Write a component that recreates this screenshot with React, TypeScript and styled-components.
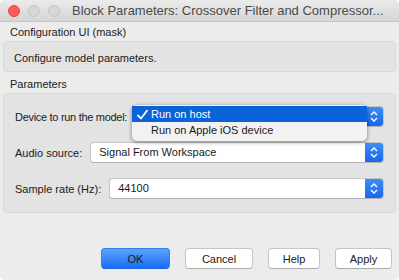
import React from "react";
import styled, { createGlobalStyle } from "styled-components";

const GlobalStyle = createGlobalStyle`
  html, body {
    margin: 0;
    padding: 0;
    background: #ffffff;
  }
  body {
    font-family: "Liberation Sans", Arial, sans-serif;
    -webkit-font-smoothing: antialiased;
  }
`;

const Window = styled.div`
  width: 399px;
  height: 280px;
  display: flex;
  flex-direction: column;
  background: #ececec;
  border-radius: 5px;
  overflow: hidden;
  box-sizing: border-box;
`;

const TitleBar = styled.div`
  height: 22px;
  flex: none;
  display: flex;
  align-items: center;
  padding-left: 8px;
  background: linear-gradient(#ebebeb, #d5d5d5);
  border-bottom: 1px solid #c4c4c4;
  box-sizing: border-box;
`;

const Light = styled.span<{ $color: string; $border: string }>`
  width: 12px;
  height: 12px;
  border-radius: 50%;
  background: ${(p) => p.$color};
  border: 1px solid ${(p) => p.$border};
  box-sizing: border-box;
  margin-right: 8px;
`;

const Title = styled.div`
  margin-left: 4px;
  font-size: 13px;
  color: #4a4a4a;
  white-space: nowrap;
`;

const Body = styled.div`
  flex: 1;
  display: flex;
  flex-direction: column;
  padding: 0 3px;
`;

const GroupLabel = styled.div<{ $top: number }>`
  font-size: 11px;
  color: #1a1a1a;
  height: 18px;
  line-height: 18px;
  margin-top: ${(p) => p.$top}px;
  padding-left: 7px;
`;

const Panel = styled.div<{ $height: number }>`
  height: ${(p) => p.$height}px;
  background: #e3e3e3;
  border: 1px solid #d9d9d9;
  border-radius: 4px;
  box-sizing: border-box;
`;

const Description = styled.div`
  font-size: 11px;
  color: #1a1a1a;
  padding: 10px 0 0 10px;
`;

const Rows = styled.div`
  display: flex;
  flex-direction: column;
  gap: 15px;
  padding: 12px 11px 0 11px;
`;

const Row = styled.div`
  display: flex;
  align-items: center;
  gap: 8px;
  height: 21px;
  position: relative;
`;

const Label = styled.div<{ $tight?: boolean }>`
  font-size: 11px;
  color: #1a1a1a;
  white-space: nowrap;
  letter-spacing: ${(p) => (p.$tight ? "-0.3px" : "0")};
`;

const Select = styled.div`
  flex: 1;
  height: 21px;
  display: flex;
  align-items: stretch;
  background: #ffffff;
  border: 1px solid #c6c6c6;
  border-bottom-color: #b3b3b3;
  border-radius: 4px;
  box-sizing: border-box;
  overflow: hidden;
`;

const SelectValue = styled.div`
  flex: 1;
  font-size: 11px;
  color: #1a1a1a;
  line-height: 19px;
  padding-left: 8px;
`;

const Stepper = styled.div`
  width: 18px;
  display: flex;
  align-items: center;
  justify-content: center;
  background: linear-gradient(#3d8ff6, #1667f0);
`;

const Popup = styled.div`
  position: absolute;
  left: 117px;
  top: -1px;
  width: 235px;
  padding: 1px 0 3px;
  background: #f2f2f2;
  border-radius: 5px;
  box-shadow: 0 1px 4px rgba(0, 0, 0, 0.45);
  z-index: 2;
`;

const Option = styled.div<{ $active?: boolean }>`
  height: 16px;
  display: flex;
  align-items: center;
  font-size: 11px;
  color: ${(p) => (p.$active ? "#ffffff" : "#1a1a1a")};
  background: ${(p) => (p.$active ? "#0a63d8" : "transparent")};
`;

const Check = styled.span`
  width: 17px;
  display: flex;
  justify-content: center;
  padding-left: 2px;
`;

const Footer = styled.div`
  display: flex;
  justify-content: flex-end;
  gap: 15px;
  padding: 0 7px 11px 0;
`;

const Button = styled.button<{ $primary?: boolean; $width: number }>`
  width: ${(p) => p.$width}px;
  height: 21px;
  font-family: "Liberation Sans", Arial, sans-serif;
  font-size: 11px;
  color: #1a1a1a;
  border-radius: 4px;
  padding: 0;
  background: ${(p) => (p.$primary ? "linear-gradient(#5aa3fb, #1a6cf6)" : "#ffffff")};
  border: 1px solid ${(p) => (p.$primary ? "#2f7ff0" : "#c4c4c4")};
  border-bottom-color: ${(p) => (p.$primary ? "#1f66e0" : "#acacac")};
`;

function Chevrons() {
  return (
    <svg width="8" height="13" viewBox="0 0 8 13">
      <path d="M1 5 L4 2 L7 5" fill="none" stroke="#fff" strokeWidth="1.4" />
      <path d="M1 8 L4 11 L7 8" fill="none" stroke="#fff" strokeWidth="1.4" />
    </svg>
  );
}

// value is left empty while the menu is open: the popup covers it
function Dropdown({ value }: { value?: string }) {
  return (
    <Select>
      <SelectValue>{value}</SelectValue>
      <Stepper>
        <Chevrons />
      </Stepper>
    </Select>
  );
}

export default function App() {
  return (
    <Window>
      <GlobalStyle />
      <TitleBar>
        <Light $color="#fc5b57" $border="#e2463f" />
        <Light $color="#d6d6d6" $border="#c6c6c6" />
        <Light $color="#d6d6d6" $border="#c6c6c6" />
        <Title>Block Parameters: Crossover Filter and Compressor...</Title>
      </TitleBar>
      <Body>
        <GroupLabel $top={1}>Configuration UI (mask)</GroupLabel>
        <Panel $height={31}>
          <Description>Configure model parameters.</Description>
        </Panel>
        <GroupLabel $top={3}>Parameters</GroupLabel>
        <Panel $height={120}>
          <Rows>
            <Row>
              <Label $tight>Device to run the model:</Label>
              <Dropdown />
              <Popup>
                <Option $active>
                  <Check>
                    <svg width="13" height="11" viewBox="0 0 13 11">
                      <path d="M1.5 6 L5 9.5 L11.5 1" fill="none" stroke="#fff" strokeWidth="1.8" />
                    </svg>
                  </Check>
                  Run on host
                </Option>
                <Option>
                  <Check />
                  Run on Apple iOS device
                </Option>
              </Popup>
            </Row>
            <Row>
              <Label>Audio source:</Label>
              <Dropdown value="Signal From Workspace" />
            </Row>
            <Row>
              <Label>Sample rate (Hz):</Label>
              <Dropdown value="44100" />
            </Row>
          </Rows>
        </Panel>
        <div style={{ flex: 1 }} />
      </Body>
      <Footer>
        <Button $primary $width={69}>OK</Button>
        <Button $width={68}>Cancel</Button>
        <Button $width={52}>Help</Button>
        <Button $width={57}>Apply</Button>
      </Footer>
    </Window>
  );
}
